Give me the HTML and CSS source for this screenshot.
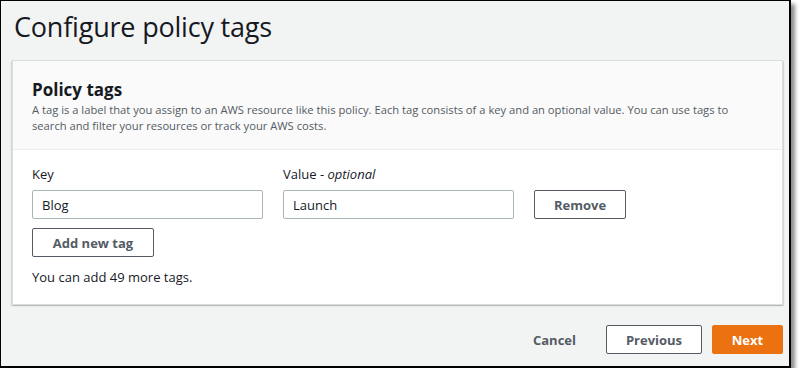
FILE: index.html
```html
<!DOCTYPE html>
<html lang="en">
<head>
    <meta charset="UTF-8">
    <meta name="viewport" content="width=device-width, initial-scale=1.0">
    <title>Configure policy tags</title>
    <link rel="stylesheet" href="styles.css">
</head>
<body>
    <div class="frame">
        <h1 class="page-title">Configure policy tags</h1>

        <div class="panel">
            <div class="panel-header">
                <h2 class="panel-title">Policy tags</h2>
                <p class="panel-desc">A tag is a label that you assign to an AWS resource like this policy. Each tag consists of a key and an optional value. You can use tags to search and filter your resources or track your AWS costs.</p>
            </div>
            <div class="panel-body">
                <div class="tag-row">
                    <div class="field">
                        <label class="field-label">Key</label>
                        <input class="field-input" type="text" value="Blog">
                    </div>
                    <div class="field">
                        <label class="field-label">Value - <i>optional</i></label>
                        <input class="field-input" type="text" value="Launch">
                    </div>
                    <button class="btn btn-remove">Remove</button>
                </div>
                <button class="btn btn-add">Add new tag</button>
                <p class="tag-count">You can add 49 more tags.</p>
            </div>
        </div>

        <div class="footer">
            <button class="btn-link">Cancel</button>
            <button class="btn btn-prev">Previous</button>
            <button class="btn btn-next">Next</button>
        </div>
    </div>
</body>
</html>
```

FILE: styles.css
```css
body {
    margin: 0;
    background-color: #ffffff;
    font-family: 'Open Sans', 'Noto Sans', sans-serif;
    color: #16191f;
}

.frame {
    width: 771px;
    height: 365px;
    border-top: 1px solid #000;
    border-left: 1px solid #000;
    border-right: 2px solid #000;
    border-bottom: 2px solid #000;
    background-color: #f2f3f3;
    box-shadow: 4px 4px 4px rgba(0, 0, 0, 0.45);
    padding: 0 6px 0 11px;
    display: flex;
    flex-direction: column;
    overflow: hidden;
}

.page-title {
    margin: 0;
    padding: 7px 0 0 2px;
    height: 59px;
    flex-shrink: 0;
    box-sizing: border-box;
    font-size: 27px;
    font-weight: 400;
    line-height: 38px;
    letter-spacing: -0.2px;
}

.panel {
    background-color: #ffffff;
    border: 1px solid #dcdede;
    box-shadow: -1px 1px 1px rgba(0, 0, 0, 0.12), 1px 1px 1px rgba(0, 0, 0, 0.12);
}

.panel-header {
    background-color: #fafafa;
    border-bottom: 1px solid #eaeded;
    padding: 17px 19px 16px;
    height: 89px;
    box-sizing: border-box;
}

.panel-title {
    margin: 0;
    font-size: 17px;
    font-weight: 700;
    line-height: 24px;
}

.panel-desc {
    margin: 0;
    font-size: 11.2px;
    line-height: 16px;
    color: #545b64;
}

.panel-body {
    padding: 14px 19px 17px;
}

.tag-row {
    display: flex;
    align-items: flex-end;
    gap: 20px;
}

.field {
    display: flex;
    flex-direction: column;
    width: 231px;
}

.field-label {
    font-size: 13px;
    line-height: 20px;
    margin-bottom: 6px;
}

.field-input {
    height: 29px;
    box-sizing: border-box;
    border: 1px solid #aab7b8;
    border-radius: 2px;
    padding: 0 9px;
    font-family: inherit;
    font-size: 13px;
    color: #16191f;
    background-color: #ffffff;
}

.btn {
    height: 29px;
    box-sizing: border-box;
    border: 1px solid #545b64;
    border-radius: 2px;
    background-color: #ffffff;
    color: #545b64;
    font-family: inherit;
    font-size: 13px;
    font-weight: 700;
    padding: 0 18px;
    cursor: pointer;
}

.btn-remove {
    width: 92px;
}

.btn-add {
    display: block;
    width: 122px;
    margin-top: 9px;
}

.tag-count {
    margin: 10px 0 0;
    font-size: 13px;
    line-height: 20px;
}

.footer {
    display: flex;
    justify-content: flex-end;
    align-items: center;
    gap: 10px;
    margin-top: 20px;
}

.btn-link {
    border: none;
    background: none;
    font-family: inherit;
    font-size: 13px;
    font-weight: 700;
    color: #545b64;
    padding: 0 20px;
    height: 29px;
    cursor: pointer;
}

.btn-prev {
    width: 96px;
}

.btn-next {
    width: 71px;
    border-color: #ec7211;
    background-color: #ec7211;
    color: #ffffff;
}
```
